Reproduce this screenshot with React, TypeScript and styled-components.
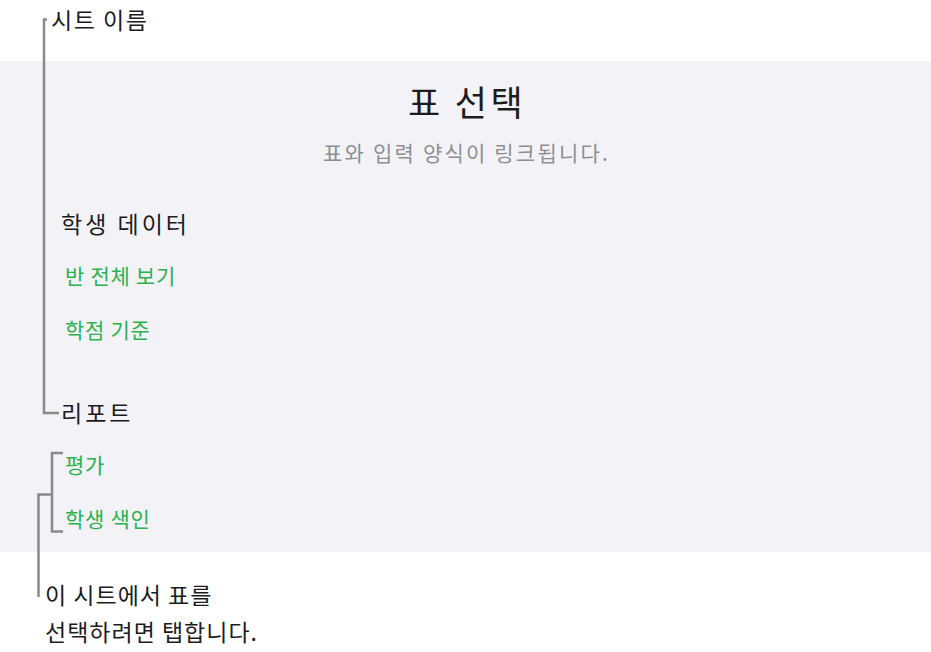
import styled, { createGlobalStyle } from "styled-components";

const GlobalStyle = createGlobalStyle`
  html, body {
    margin: 0;
    padding: 0;
    background: #ffffff;
  }
  body {
    font-family: "Noto Sans CJK KR", "Noto Sans", sans-serif;
    color: #1c1c1e;
  }
`;

const sheets = [
  { name: "학생 데이터", tables: ["반 전체 보기", "학점 기준"] },
  { name: "리포트", tables: ["평가", "학생 색인"] },
];

const App = () => {
  return (
    <Page>
      <GlobalStyle />
      <Callouts width="931" height="652" viewBox="0 0 931 652">
        <path d="M47 19.5 H44 V413 H59" />
        <path d="M63 453 H52 V531.5 H63" />
        <path d="M52 494.5 H38.5 V597" />
      </Callouts>

      <TopLabel>시트 이름</TopLabel>

      <Panel>
        <Title>표 선택</Title>
        <Subtitle>표와 입력 양식이 링크됩니다.</Subtitle>

        {sheets.map((sheet, i) => (
          <Sheet key={sheet.name} first={i === 0}>
            <SheetName>{sheet.name}</SheetName>
            {sheet.tables.map((t) => (
              <TableLink key={t}>{t}</TableLink>
            ))}
          </Sheet>
        ))}
      </Panel>

      <BottomLabel>
        이 시트에서 표를
        <br />
        선택하려면 탭합니다.
      </BottomLabel>
    </Page>
  );
};

export default App;

const Page = styled.div`
  position: relative;
  width: 931px;
  height: 652px;
  overflow: hidden;
`;

const Callouts = styled.svg`
  position: absolute;
  left: 0;
  top: 0;
  pointer-events: none;

  path {
    fill: none;
    stroke: #8a8a8a;
    stroke-width: 2.5;
  }
`;

const TopLabel = styled.div`
  height: 61px;
  box-sizing: border-box;
  padding: 5px 0 0 51px;
  font-size: 23px;
  line-height: 28px;
  letter-spacing: 1.5px;
  color: #1c1c1e;
`;

const Panel = styled.div`
  height: 491px;
  box-sizing: border-box;
  background: #f2f2f7;
  padding-top: 19px;
  display: flex;
  flex-direction: column;
`;

const Title = styled.div`
  text-align: center;
  font-size: 35px;
  line-height: 42px;
  letter-spacing: 3.4px;
  padding-left: 3px;
  color: #1c1c1e;
`;

const Subtitle = styled.div`
  margin-top: 16px;
  text-align: center;
  font-size: 21px;
  line-height: 28px;
  letter-spacing: 2.2px;
  padding-left: 2px;
  color: #8e8e93;
`;

const Sheet = styled.div<{ first?: boolean }>`
  display: flex;
  flex-direction: column;
  margin-top: ${(p) => (p.first ? "42px" : "41px")};
  padding-left: 61px;
`;

const SheetName = styled.div`
  font-size: 23px;
  line-height: 30px;
  height: 30px;
  margin-bottom: 10px;
  letter-spacing: 3px;
  color: #1c1c1e;
`;

const TableLink = styled.div`
  height: 54px;
  display: flex;
  align-items: center;
  padding-left: 4px;
  font-size: 21px;
  letter-spacing: 0.7px;
  color: #2ab24f;
`;

const BottomLabel = styled.div`
  margin-top: 24px;
  padding-left: 45px;
  font-size: 23px;
  line-height: 37px;
  letter-spacing: 1px;
  color: #1c1c1e;
`;
